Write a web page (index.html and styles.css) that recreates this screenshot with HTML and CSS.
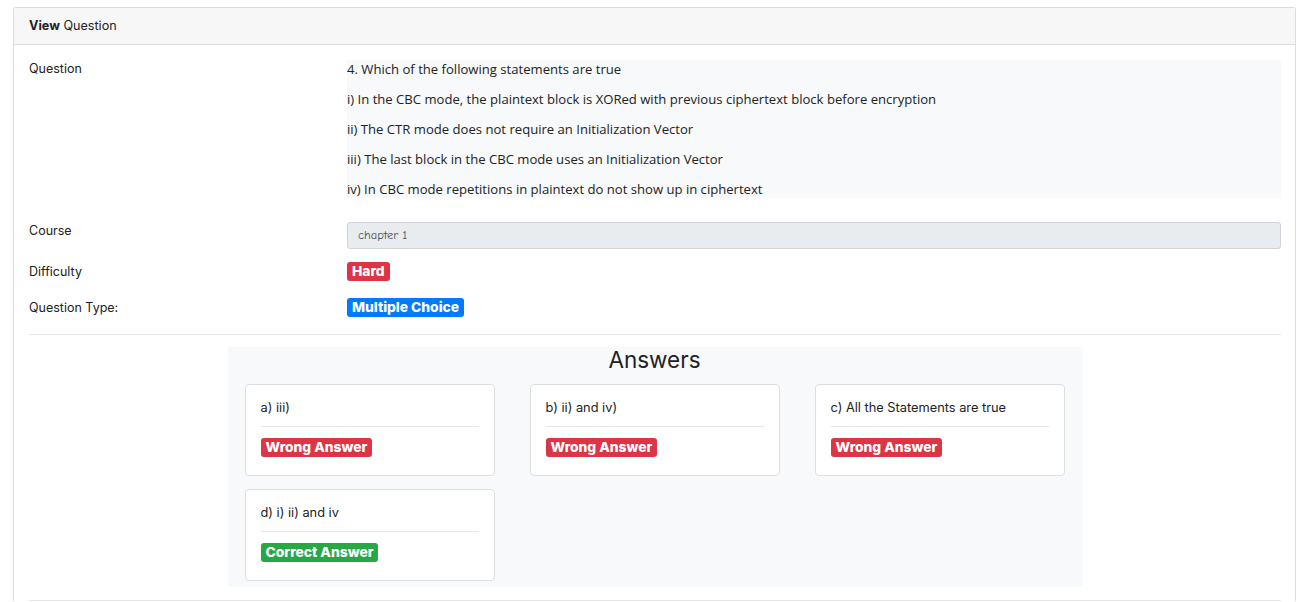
FILE: index.html
```html
<!DOCTYPE html>
<html>
<head>
<meta charset="utf-8">
<link rel="stylesheet" href="styles.css">
</head>
<body>
<div class="page">
  <div class="card">
    <div class="card-header"><b>View</b> Question</div>
    <div class="card-body">
      <div class="row row-question">
        <div class="label">Question</div>
        <div class="question-text">
          <p>4. Which of the following statements are true</p>
          <p>i) In the CBC mode, the plaintext block is XORed with previous ciphertext block before encryption</p>
          <p>ii) The CTR mode does not require an Initialization Vector</p>
          <p>iii) The last block in the CBC mode uses an Initialization Vector</p>
          <p>iv) In CBC mode repetitions in plaintext do not show up in ciphertext</p>
        </div>
      </div>
      <div class="row row-course">
        <div class="label">Course</div>
        <div class="input">chapter 1</div>
      </div>
      <div class="row row-diff">
        <div class="label">Difficulty</div>
        <div><span class="badge red">Hard</span></div>
      </div>
      <div class="row row-type">
        <div class="label">Question Type:</div>
        <div><span class="badge blue">Multiple Choice</span></div>
      </div>
      <hr class="divider">
      <div class="answers">
        <h3>Answers</h3>
        <div class="answer-grid">
          <div class="answer">
            <div class="answer-text">a) iii)</div>
            <hr class="answer-hr">
            <span class="badge red">Wrong Answer</span>
          </div>
          <div class="answer">
            <div class="answer-text">b) ii) and iv)</div>
            <hr class="answer-hr">
            <span class="badge red">Wrong Answer</span>
          </div>
          <div class="answer">
            <div class="answer-text">c) All the Statements are true</div>
            <hr class="answer-hr">
            <span class="badge red">Wrong Answer</span>
          </div>
          <div class="answer">
            <div class="answer-text">d) i) ii) and iv</div>
            <hr class="answer-hr">
            <span class="badge green">Correct Answer</span>
          </div>
        </div>
      </div>
      <hr class="divider bottom">
    </div>
  </div>
</div>
</body>
</html>
```

FILE: styles.css
```css
html, body {
  margin: 0;
  padding: 0;
  background: #fff;
}
body {
  font-family: Inter, "Noto Sans", sans-serif;
  color: #212529;
}
.page {
  padding: 7px 19px 0 13px;
}
.card {
  border: 1px solid #dcdcdc;
  border-bottom: none;
  border-radius: 3px 3px 0 0;
}
.card-header {
  background: #f7f7f7;
  border-bottom: 1px solid #dcdcdc;
  height: 36px;
  line-height: 36px;
  padding: 0 15px;
  font-size: 12.6px;
  color: #222;
}
.card-header b {
  font-weight: 700;
}
.card-body {
  padding: 15px 14px 0 15px;
}
.row {
  display: grid;
  grid-template-columns: 318px 1fr;
}
.label {
  font-size: 12.5px;
  line-height: 18px;
  color: #222;
}
.question-text {
  background: #f8f9fa;
  font-family: "Open Sans", "Noto Sans", sans-serif;
  font-size: 13.1px;
  color: #222;
}
.question-text p {
  margin: 0 0 12px 0;
  line-height: 18px;
}
.question-text p:last-child {
  margin-bottom: 0;
}
.row-course {
  margin-top: 24px;
  align-items: start;
}
.input {
  background: #e9ecef;
  border: 1px solid #ced4da;
  border-radius: 3px;
  height: 25px;
  line-height: 25px;
  padding: 0 10px;
  font-family: "Comic Sans MS", "Comic Neue", cursive;
  font-size: 12.5px;
  color: #495057;
}
.row-diff {
  margin-top: 13px;
}
.row-type {
  margin-top: 16px;
}
.row-diff .label, .row-type .label {
  line-height: 19px;
}
.badge {
  display: inline-block;
  font-size: 13.8px;
  font-weight: 800;
  line-height: 19px;
  height: 19px;
  padding: 0 5px;
  color: #fff;
  border-radius: 3px;
  letter-spacing: 0;
  vertical-align: top;
}
.red { background: #dc3545; }
.blue { background: #007bff; }
.green { background: #28a745; }
.divider {
  border: none;
  border-top: 1px solid #e6e6e6;
  margin: 16px 0 12px 0;
}
.divider.bottom {
  margin: 13px 0 0 0;
}
.answers {
  width: 855px;
  margin: 0 auto;
  background: #f8f9fa;
  padding: 0 18px 6px 17px;
  box-sizing: border-box;
}
.answers h3 {
  margin: 0 0 11px 0;
  font-size: 22.5px;
  font-weight: 400;
  line-height: 26px;
  text-align: center;
  color: #222;
}
.answer-grid {
  display: grid;
  grid-template-columns: repeat(3, 250px);
  column-gap: 35px;
  row-gap: 13px;
}
.answer {
  background: #fff;
  border: 1px solid #dcdfe2;
  border-radius: 4px;
  height: 92px;
  box-sizing: border-box;
  padding: 15px 15px 0 15px;
}
.answer-text {
  font-size: 12.8px;
  line-height: 16px;
  color: #222;
}
.answer-hr {
  border: none;
  border-top: 1px solid #e6e6e6;
  margin: 10px 0 11px 0;
}
```
